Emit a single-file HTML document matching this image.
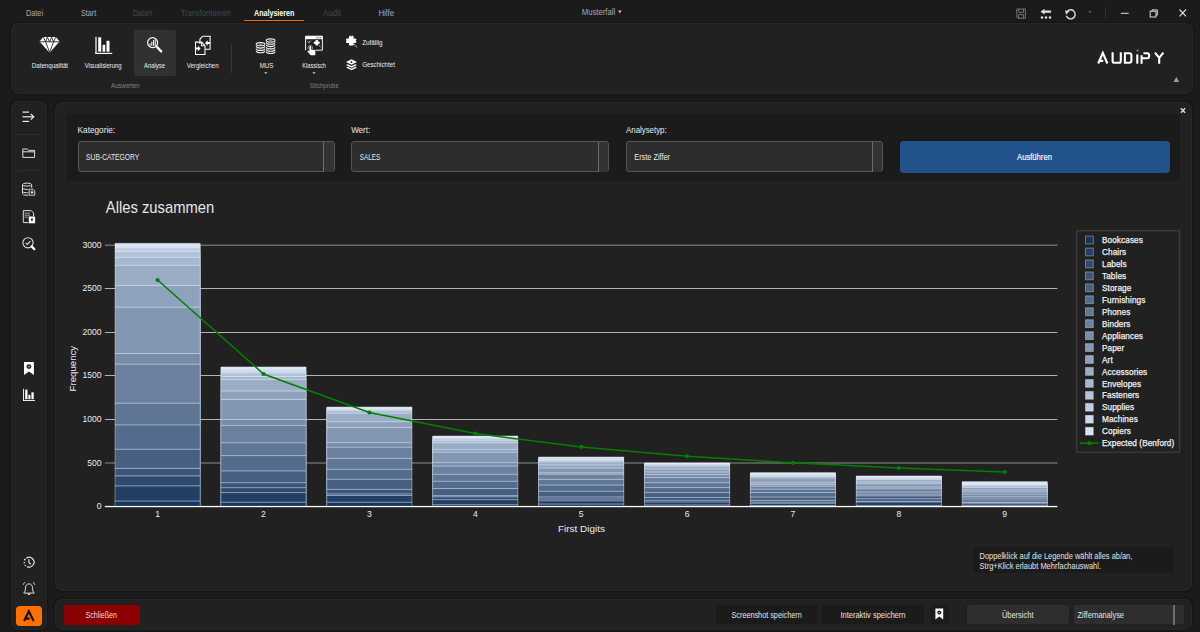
<!DOCTYPE html>
<html><head><meta charset="utf-8"><style>
html,body{margin:0;padding:0;}
body{width:1200px;height:632px;overflow:hidden;background:#1b1b1b;position:relative;font-family:"Liberation Sans", sans-serif;}
.t{position:absolute;white-space:nowrap;}
.a{position:absolute;box-sizing:border-box;}
svg{position:absolute;overflow:visible;}
text{font-family:"Liberation Sans", sans-serif;white-space:pre;}
</style></head><body>
<!-- panels -->
<div class="a" style="left:11px;top:23px;width:1182px;height:71px;background:#212121;border-radius:7px;border:1px solid #272727;box-shadow:0 0 1.5px 0.5px #151515;"></div>
<div class="a" style="left:11px;top:101px;width:35.6px;height:528.7px;background:#212121;border-radius:7px;border:1px solid #272727;box-shadow:0 0 1.5px 0.5px #151515;"></div>
<div class="a" style="left:55px;top:101.7px;width:1136.7px;height:489.3px;background:#212121;border-radius:7px;border:1px solid #272727;box-shadow:0 0 1.5px 0.5px #151515;"></div>
<div class="a" style="left:67.4px;top:113.7px;width:1112.4px;height:67.6px;background:#1b1b1b;border-radius:3px;"></div>
<div class="a" style="left:55px;top:599px;width:1136.5px;height:30.7px;background:#212121;border-radius:7px;border:1px solid #272727;box-shadow:0 0 1.5px 0.5px #151515;"></div>

<!-- title bar underline -->
<div class="a" style="left:243.6px;top:19.9px;width:60.4px;height:1.6px;background:#e86a00;"></div>

<!-- ribbon highlight -->
<div class="a" style="left:133.7px;top:29.6px;width:42.2px;height:46.8px;background:#313131;border-radius:2px;"></div>
<div class="a" style="left:231px;top:43px;width:1px;height:30.3px;background:#363636;"></div>
<!-- title bar separator -->
<div class="a" style="left:1105px;top:6.5px;width:1px;height:12.5px;background:#303030;"></div>

<!-- dropdowns -->
<div class="a" style="left:77.5px;top:141.1px;width:257.1px;height:31.4px;background:#2d2d2d;border:1.2px solid #555555;border-radius:3px;"></div>
<div class="a" style="left:323.3px;top:142px;width:10.5px;height:29.6px;background:#333;border-left:1.2px solid #6c6c6c;border-radius:0 3px 3px 0;"></div>
<div class="a" style="left:351.2px;top:141.1px;width:257.8px;height:31.4px;background:#2d2d2d;border:1.2px solid #555555;border-radius:3px;"></div>
<div class="a" style="left:598.3px;top:142px;width:9.9px;height:29.6px;background:#333;border-left:1.2px solid #6c6c6c;border-radius:0 3px 3px 0;"></div>
<div class="a" style="left:626px;top:141.1px;width:257.1px;height:31.4px;background:#2d2d2d;border:1.2px solid #555555;border-radius:3px;"></div>
<div class="a" style="left:872.2px;top:142px;width:10.1px;height:29.6px;background:#333;border-left:1.2px solid #6c6c6c;border-radius:0 3px 3px 0;"></div>
<div class="a" style="left:899.8px;top:141.1px;width:270px;height:31.7px;background:#21528c;border-radius:4px;"></div>

<!-- tooltip -->
<div class="a" style="left:973.3px;top:547.1px;width:200.6px;height:26.1px;background:#1b1b1b;border-radius:3px;"></div>

<!-- bottom buttons -->
<div class="a" style="left:63.5px;top:604.5px;width:76.5px;height:20px;background:#8b0000;border-radius:2px;"></div>
<div class="a" style="left:716.3px;top:605px;width:100.5px;height:18.7px;background:#1b1b1b;border-radius:2px;"></div>
<div class="a" style="left:822.3px;top:605px;width:101.4px;height:18.7px;background:#1b1b1b;border-radius:2px;"></div>
<div class="a" style="left:929.6px;top:605px;width:19.4px;height:18.7px;background:#1b1b1b;border-radius:2px;"></div>
<div class="a" style="left:967px;top:604.5px;width:102px;height:19.8px;background:#2e2e2e;border-radius:2px;"></div>
<div class="a" style="left:1073.9px;top:604.5px;width:109.8px;height:19.8px;background:#2e2e2e;border-radius:2px;"></div>
<div class="a" style="left:1173.2px;top:604.5px;width:1.6px;height:20px;background:#6a6a6a;"></div>

<!-- orange A -->
<div class="a" style="left:15.7px;top:605.6px;width:26.5px;height:20.7px;background:#ff7000;border-radius:4px;"></div>

<!-- sidebar separators -->
<div class="a" style="left:17px;top:133.5px;width:24px;height:1px;background:#2c2c2c;"></div>
<div class="a" style="left:17px;top:170.2px;width:24px;height:1px;background:#2c2c2c;"></div>

<!-- ICONS -->
<svg style="left:0;top:0" width="1200" height="632" viewBox="0 0 1200 632">
 <g fill="#ffffff" stroke="none">
  <!-- diamond -->
  <path d="M43.2 37 L55.9 37 L59.6 41.6 L49.6 52.7 L39.5 41.6 Z"/>
 </g>
 <g stroke="#212121" stroke-width="0.9" fill="none">
  <path d="M39.8 41.8 L59.3 41.8"/>
  <path d="M43.4 37.2 L45.6 41.8 L47.4 37.2 M47.4 37.2 L49.6 41.8 L51.6 37.2 L53.6 41.8 L55.7 37.2"/>
  <path d="M45.6 41.8 L49.6 52.4 L53.6 41.8"/>
 </g>
 <!-- bar chart ribbon -->
 <g fill="#ffffff">
  <rect x="95.4" y="36.8" width="1.2" height="17.2"/>
  <rect x="95.4" y="52.8" width="16.8" height="1.2"/>
  <rect x="98.2" y="37.3" width="3.0" height="14.4"/>
  <rect x="102.6" y="44.8" width="2.6" height="6.9"/>
  <rect x="106.5" y="40.8" width="3.0" height="10.9"/>
 </g>
 <!-- magnifier analyse -->
 <g fill="none" stroke="#ffffff">
  <circle cx="152.6" cy="42.6" r="5.0" stroke-width="1.2"/>
  <path d="M156.4 46.4 L161.2 51.4" stroke-width="2.3" stroke-linecap="round"/>
 </g>
 <g fill="#ffffff">
  <rect x="149.6" y="43.5" width="1" height="2.2"/>
  <rect x="151.3" y="41.8" width="1" height="3.9"/>
  <rect x="153" y="40.2" width="1" height="5.5"/>
  <rect x="154.7" y="39.4" width="1" height="6.3"/>
 </g>
 <!-- vergleichen -->
 <g fill="none" stroke="#ffffff" stroke-width="1.05">
  <path d="M202.5 36.3 L210.1 36.3 L210.1 49.3 L205.4 49.3 M199.9 44 L199.9 39.3 L202.5 36.3"/>
  <path d="M195.5 42.1 L201.6 42.1 L205 45.7 L205 54.4 L195.5 54.4 Z"/>
  <path d="M201.6 42.1 L201.6 45.7 L205 45.7"/>
 </g>
 <g fill="#ffffff">
  <path d="M195.6 47.4 L197.9 47.4 L197.9 45.8 L200.6 48.5 L197.9 51.2 L197.9 49.6 L195.6 49.6 Z"/>
  <path d="M210 41.9 L207.7 41.9 L207.7 40.3 L205 43 L207.7 45.7 L207.7 44.1 L210 44.1 Z"/>
 </g>
 <!-- coins -->
 <g fill="none" stroke="#f2f2f2" stroke-width="1.1">
  <path d="M256.2 50.7 Q256.2 52.7 260.5 52.7 Q264.8 52.7 264.8 50.7"/>
  <path d="M256.2 48.400000000000006 Q256.2 50.400000000000006 260.5 50.400000000000006 Q264.8 50.400000000000006 264.8 48.400000000000006"/>
  <path d="M256.2 46.1 Q256.2 48.1 260.5 48.1 Q264.8 48.1 264.8 46.1"/>
  <ellipse cx="260.5" cy="44.2" rx="4.3" ry="1.6"/>
  <path d="M266.3 51.5 Q266.3 53.5 270.65 53.5 Q275 53.5 275 51.5"/>
  <path d="M266.3 49.2 Q266.3 51.2 270.65 51.2 Q275 51.2 275 49.2"/>
  <path d="M266.3 46.900000000000006 Q266.3 48.900000000000006 270.65 48.900000000000006 Q275 48.900000000000006 275 46.900000000000006"/>
  <path d="M266.3 44.6 Q266.3 46.6 270.65 46.6 Q275 46.6 275 44.6"/>
  <path d="M266.3 42.300000000000004 Q266.3 44.300000000000004 270.65 44.300000000000004 Q275 44.300000000000004 275 42.300000000000004"/>
  <ellipse cx="270.65" cy="40.5" rx="4.35" ry="1.6"/>
 </g>
 <ellipse cx="260.5" cy="44.3" rx="2.2" ry="0.7" fill="#8a8a8a"/>
 <ellipse cx="270.65" cy="40.6" rx="2.2" ry="0.7" fill="#8a8a8a"/>
 <!-- klassisch window -->
 <path d="M305.6 50.2 L305.6 36.2 L322.4 36.2 L322.4 50.2 L315.6 50.2" fill="none" stroke="#ffffff" stroke-width="0.95"/>
 <rect x="305.6" y="36.2" width="16.8" height="3" fill="#ffffff"/>
 <g fill="#212121"><circle cx="320.6" cy="37.7" r="0.55"/><circle cx="318.8" cy="37.7" r="0.55"/><circle cx="317" cy="37.7" r="0.55"/></g>
 <g fill="#ffffff">
  <rect x="313.9" y="41.4" width="5.8" height="2.6" rx="0.8"/>
  <rect x="315.5" y="39.9" width="2.6" height="5.6" rx="0.8"/>
  <path d="M309.4 47.2 Q309.4 45.9 310.3 45.9 Q311.2 45.9 311.2 47.2 L311.2 49.4 L314.6 50 Q315.4 50.2 315.4 51 L315.2 55.2 L310.6 55.2 L307.6 51.6 Q307.4 50.8 308.2 50.6 L309.4 51.2 Z"/>
 </g>
 <path d="M308 49.2 Q307.4 46.2 310.3 45 Q313.2 46.2 312.6 49.2" fill="none" stroke="#bbbbbb" stroke-width="0.7"/>
 <path d="M307.8 41.6 l1 1 l1.8 -1.9" stroke="#ffffff" stroke-width="0.9" fill="none"/>
 <path d="M318.8 45 l2 2.4" stroke="#cccccc" stroke-width="0.7" fill="none"/>
 <!-- clover -->
 <g fill="#ffffff">
  <rect x="346" y="38.4" width="10.3" height="4.5" rx="1.2"/>
  <rect x="349" y="35.8" width="4.6" height="9.8" rx="1.2"/>
 </g>
 <g fill="#212121"><circle cx="346" cy="40.65" r="0.6"/><circle cx="356.3" cy="40.65" r="0.6"/><circle cx="351.3" cy="35.8" r="0.6"/></g>
 <path d="M353.8 43.8 L357 47.6" stroke="#dddddd" stroke-width="0.8"/>
 <!-- layers -->
 <g fill="#ffffff">
  <path d="M346 62 L351.5 59.3 L357 62 L351.5 64.7 Z"/>
  <path d="M346 65 L347.6 64.2 L351.5 66.1 L355.4 64.2 L357 65 L351.5 67.7 Z"/>
  <path d="M346 67.6 L347.6 66.8 L351.5 68.7 L355.4 66.8 L357 67.6 L351.5 70.3 Z"/>
 </g>
 <circle cx="351.5" cy="62" r="0.9" fill="#212121"/>
 <!-- small dropdown arrows ribbon -->
 <path d="M264.2 72.2 L267.4 72.2 L265.8 74.1 Z" fill="#d8d8d8"/>
 <path d="M312.4 72.2 L315.6 72.2 L314 74.1 Z" fill="#d8d8d8"/>
 <!-- Musterfall arrow -->
 <path d="M618.2 10.4 L621.6 10.4 L619.9 13.6 Z" fill="#c8c8c8"/>

 <!-- title bar icons -->
 <g fill="none" stroke="#767676" stroke-width="1">
  <path d="M1016.8 9 L1025.4 9 L1025.4 18.2 L1017.8 18.2 L1016.8 17.2 Z"/>
  <path d="M1018.8 9 L1018.8 12.4 L1023.4 12.4 L1023.4 9 M1018.6 18.2 L1018.6 14.6 L1023.6 14.6 L1023.6 18.2"/>
 </g>
 <g fill="#dddddd">
  <path d="M1040.5 11.7 L1044.6 8.8 L1044.6 10.6 L1051.1 10.6 L1051.1 12.8 L1044.6 12.8 L1044.6 14.6 Z"/>
  <circle cx="1042" cy="17.4" r="1.25"/><circle cx="1046" cy="17.4" r="1.25"/><circle cx="1050" cy="17.4" r="1.25"/>
 </g>
 <path d="M1067.4 11.2 A4.5 4.5 0 1 1 1066.4 15.8" fill="none" stroke="#dddddd" stroke-width="1.4"/>
 <path d="M1065 10.4 L1069.6 11.2 L1066 14.6 Z" fill="#dddddd"/>
 <path d="M1088.2 11.2 L1092 11.2 L1090.1 13.1 Z" fill="#666"/>
 <rect x="1120.8" y="12.8" width="7.9" height="1" fill="#dddddd"/>
 <g fill="none" stroke="#dddddd" stroke-width="1">
  <rect x="1150.2" y="11.2" width="5.8" height="5.8"/>
  <path d="M1152 11.2 L1152 9.9 L1157.3 9.9 L1157.3 15.2 L1156 15.2"/>
  <path d="M1179.5 9.5 L1186 16.4 M1186 9.5 L1179.5 16.4" stroke-width="1.1"/>
 </g>

 <!-- AUDIPY logo -->
 <g fill="none" stroke="#ffffff" stroke-width="2.1" stroke-linejoin="miter">
  <path d="M1098.2 63.5 L1102.8 52.8 L1107.4 63.5 M1099.6 60.9 L1103.2 60.9"/>
  <path d="M1112.6 52.3 L1112.6 61 Q1112.6 62.8 1114.4 62.8 L1119 62.8 Q1120.8 62.8 1120.8 61 L1120.8 52.3"/>
  <path d="M1124.9 53.2 L1129.4 53.2 Q1131.4 53.2 1131.4 55.2 L1131.4 60.8 Q1131.4 62.8 1129.4 62.8 L1124.9 62.8 Z"/>
  <path d="M1137.3 54.4 L1137.3 63.7"/>
  <path d="M1141.6 63.7 L1141.6 55.2 M1143.4 53.2 L1147.2 53.2 Q1149.1 53.2 1149.1 55.2 L1149.1 56.2 Q1149.1 58.2 1147.2 58.2 L1141.6 58.2"/>
  <path d="M1155 52.6 L1159.2 57.8 L1163.4 52.6 M1159.2 57.8 L1159.2 63.7"/>
 </g>
 <circle cx="1137.5" cy="50.6" r="1" fill="#ff7000"/>
 <path d="M1173.5 81.9 L1179.2 81.9 L1176.35 76.9 Z" fill="#9c9ca2"/>

 <!-- close x panel -->
 <path d="M1180.9 108.3 L1185.1 112.7 M1185.1 108.3 L1180.9 112.7" stroke="#e0e0e0" stroke-width="1.3"/>

 <!-- sidebar icons -->
 <g fill="#eeeeee">
  <rect x="22.5" y="111.5" width="6.5" height="1.2"/>
  <rect x="22.5" y="120.8" width="6.5" height="1.2"/>
  <rect x="22.5" y="116.2" width="11.3" height="1.2"/>
  <path d="M31.2 113.6 L34.6 116.8 L31.2 120 L30.4 119.2 L32.9 116.8 L30.4 114.4 Z"/>
 </g>
 <g fill="none" stroke="#dddddd" stroke-width="1">
  <path d="M22.8 149 L27.4 149 L28.6 150.4 L34.6 150.4 L34.6 157.4 L22.8 157.4 Z"/>
  <path d="M22.8 151.8 L34.6 151.8"/>
  <!-- database -->
  <ellipse cx="27.1" cy="184.6" rx="4.6" ry="1.5"/>
  <path d="M22.5 184.6 L22.5 193.8 Q22.5 195.3 27.1 195.3 L28.4 195.3 M31.7 184.6 L31.7 187.8"/>
  <path d="M22.5 187.9 Q22.5 189.4 27.1 189.4 L28.4 189.4 M22.5 191.3 Q22.5 192.8 27.1 192.8 L28.4 192.8"/>
  <!-- doc -->
  <path d="M31.2 210.6 L23.3 210.6 L23.3 222.6 L28.4 222.6 M31.2 210.6 L33.6 213 L33.6 216"/>
  <!-- magnifier check -->
  <circle cx="28" cy="242.8" r="5.1" stroke-width="1.1"/>
  <path d="M25.7 242.8 L27.3 244.4 L30.4 241.2" stroke-width="1.1"/>
 </g>
 <path d="M31.6 246.4 L34.3 249.1" stroke="#ffffff" stroke-width="2.2" stroke-linecap="round"/>
 <g fill="#ffffff">
  <rect x="24.6" y="212.6" width="5.4" height="1.1" fill="#9a9a9a"/>
  <rect x="24.6" y="214.6" width="5.4" height="1.1" fill="#9a9a9a"/>
  <rect x="24.6" y="216.6" width="3.6" height="1.1" fill="#9a9a9a"/>
 </g>
 <path d="M29.2 189.2 L33 189.2 L34.8 191 L34.8 195.2 L29.2 195.2 Z" fill="#212121" stroke="#dddddd" stroke-width="0.9"/>
 <path d="M32 190.6 L32 193.8 M30.6 192.2 L33.4 192.2" stroke="#ffffff" stroke-width="1"/>
 <rect x="28.8" y="216.5" width="6.3" height="6.8" fill="#ffffff"/>
 <path d="M30.6 219.6 L33.3 219.6 L31.95 221.4 Z" fill="#212121"/>
 <rect x="31.1" y="218.3" width="1.7" height="1.5" fill="#212121"/>
 <!-- bookmark -->
 <path d="M24 361.9 L33.9 361.9 L33.9 374.9 L28.95 371.4 L24 374.9 Z" fill="#ffffff"/>
 <circle cx="28.95" cy="366.6" r="2.4" fill="#212121"/>
 <circle cx="28.95" cy="366.6" r="1.0" fill="#9a9a9a"/>
 <!-- bar chart sidebar -->
 <g fill="#ffffff">
  <rect x="23.1" y="388.9" width="0.9" height="12.1"/>
  <rect x="23.1" y="400.1" width="11.8" height="0.9"/>
  <rect x="25.2" y="389.6" width="2.3" height="9.6"/>
  <rect x="28.4" y="394.8" width="2" height="4.4"/>
  <rect x="31.4" y="392.3" width="2.3" height="6.9"/>
 </g>
 <!-- history -->
 <path d="M26.29 558.19 A4.9 4.9 0 1 1 27.03 566.64" fill="none" stroke="#e4e4e4" stroke-width="1.2"/>
 <path d="M28.9 559.3 L28.9 562.5 L30.9 564.3" fill="none" stroke="#e4e4e4" stroke-width="1.1"/>
 <g fill="#e4e4e4"><circle cx="24.8" cy="559.6" r="0.95"/><circle cx="24.2" cy="562.7" r="0.75"/><circle cx="25.3" cy="565.5" r="0.75"/></g>
 <!-- bell -->
 <path d="M23.8 593.1 Q25.5 591.6 25.5 588.2 Q25.5 583.9 29 583.9 Q32.5 583.9 32.5 588.2 Q32.5 591.6 34.2 593.1 Z" fill="none" stroke="#dcdcdc" stroke-width="1"/>
 <path d="M23.1 584.8 Q23.7 582.9 25.1 582.2 M34.9 584.8 Q34.3 582.9 32.9 582.2" fill="none" stroke="#dcdcdc" stroke-width="0.9"/>
 <path d="M27.6 593.6 L30.4 593.6 L29.9 595 L28.1 595 Z" fill="#e4e4e4"/>
 <!-- orange A glyph -->
 <g fill="none" stroke="#111" stroke-width="2.1">
  <path d="M24.1 621 L28.85 611.2 L33.6 621 M25.4 618.6 L29.6 618.6"/>
 </g>
 <!-- bookmark bottom -->
 <path d="M935.4 608.6 L943.2 608.6 L943.2 619.4 L939.3 616.6 L935.4 619.4 Z" fill="#ffffff"/>
 <circle cx="939.3" cy="612.6" r="2.0" fill="#1b1b1b"/>
 <circle cx="939.3" cy="612.6" r="0.8" fill="#9a9a9a"/>
</svg>

<svg style="left:0;top:0" width="1200" height="632" viewBox="0 0 1200 632">
<rect x="104.8" y="244.6" width="952.6" height="1.2" fill="#b4b4b4" opacity="0.62"/>
<rect x="104.8" y="288" width="952.6" height="1" fill="#b4b4b4" opacity="1"/>
<rect x="104.8" y="332" width="952.6" height="1" fill="#b4b4b4" opacity="1"/>
<rect x="104.8" y="375" width="952.6" height="1" fill="#b4b4b4" opacity="1"/>
<rect x="104.8" y="419" width="952.6" height="1" fill="#b4b4b4" opacity="1"/>
<rect x="104.8" y="462.4" width="952.6" height="1.2" fill="#b4b4b4" opacity="0.62"/>
<rect x="115.00" y="243.40" width="85.2" height="263.10" fill="#d6e4f5"/>
<rect x="115.00" y="246.10" width="85.2" height="260.40" fill="#cad9eb"/>
<rect x="115.00" y="247.70" width="85.2" height="258.80" fill="#becee2"/>
<rect x="115.00" y="251.40" width="85.2" height="255.10" fill="#b2c3d8"/>
<rect x="115.00" y="257.40" width="85.2" height="249.10" fill="#a6b8cf"/>
<rect x="115.00" y="265.30" width="85.2" height="241.20" fill="#9aadc5"/>
<rect x="115.00" y="285.50" width="85.2" height="221.00" fill="#8ea2bc"/>
<rect x="115.00" y="307.20" width="85.2" height="199.30" fill="#8297b2"/>
<rect x="115.00" y="353.50" width="85.2" height="153.00" fill="#768ca8"/>
<rect x="115.00" y="364.20" width="85.2" height="142.30" fill="#6b819f"/>
<rect x="115.00" y="403.20" width="85.2" height="103.30" fill="#5f7695"/>
<rect x="115.00" y="424.90" width="85.2" height="81.60" fill="#536b8c"/>
<rect x="115.00" y="449.30" width="85.2" height="57.20" fill="#476082"/>
<rect x="115.00" y="468.40" width="85.2" height="38.10" fill="#3b5579"/>
<rect x="115.00" y="475.90" width="85.2" height="30.60" fill="#2f4a6f"/>
<rect x="115.00" y="485.90" width="85.2" height="20.60" fill="#233f66"/>
<rect x="115.00" y="501.10" width="85.2" height="5.40" fill="#17345c"/>
<rect x="115.00" y="500.60" width="85.2" height="1" fill="#f0f6ff" opacity="0.5"/>
<rect x="115.00" y="485.40" width="85.2" height="1" fill="#f0f6ff" opacity="0.5"/>
<rect x="115.00" y="475.40" width="85.2" height="1" fill="#f0f6ff" opacity="0.5"/>
<rect x="115.00" y="467.90" width="85.2" height="1" fill="#f0f6ff" opacity="0.5"/>
<rect x="115.00" y="448.80" width="85.2" height="1" fill="#f0f6ff" opacity="0.5"/>
<rect x="115.00" y="424.40" width="85.2" height="1" fill="#f0f6ff" opacity="0.5"/>
<rect x="115.00" y="402.70" width="85.2" height="1" fill="#f0f6ff" opacity="0.5"/>
<rect x="115.00" y="363.70" width="85.2" height="1" fill="#f0f6ff" opacity="0.5"/>
<rect x="115.00" y="353.00" width="85.2" height="1" fill="#f0f6ff" opacity="0.5"/>
<rect x="115.00" y="306.70" width="85.2" height="1" fill="#f0f6ff" opacity="0.5"/>
<rect x="115.00" y="285.00" width="85.2" height="1" fill="#f0f6ff" opacity="0.5"/>
<rect x="115.00" y="264.80" width="85.2" height="1" fill="#f0f6ff" opacity="0.5"/>
<rect x="115.00" y="256.90" width="85.2" height="1" fill="#f0f6ff" opacity="0.5"/>
<rect x="115.00" y="250.90" width="85.2" height="1" fill="#f0f6ff" opacity="0.5"/>
<rect x="115.00" y="247.20" width="85.2" height="1" fill="#f0f6ff" opacity="0.5"/>
<rect x="115.00" y="245.60" width="85.2" height="1" fill="#f0f6ff" opacity="0.5"/>
<rect x="115.00" y="242.90" width="85.2" height="1" fill="#f0f6ff" opacity="0.5"/>
<rect x="114.50" y="243.40" width="1" height="263.10" fill="#ffffff" opacity="0.35"/>
<rect x="199.70" y="243.40" width="1" height="263.10" fill="#ffffff" opacity="0.35"/>
<rect x="220.90" y="367.00" width="85.2" height="139.50" fill="#d6e4f5"/>
<rect x="220.90" y="369.00" width="85.2" height="137.50" fill="#cad9eb"/>
<rect x="220.90" y="371.10" width="85.2" height="135.40" fill="#becee2"/>
<rect x="220.90" y="372.70" width="85.2" height="133.80" fill="#b2c3d8"/>
<rect x="220.90" y="376.50" width="85.2" height="130.00" fill="#a6b8cf"/>
<rect x="220.90" y="379.60" width="85.2" height="126.90" fill="#9aadc5"/>
<rect x="220.90" y="391.00" width="85.2" height="115.50" fill="#8ea2bc"/>
<rect x="220.90" y="399.50" width="85.2" height="107.00" fill="#8297b2"/>
<rect x="220.90" y="419.50" width="85.2" height="87.00" fill="#768ca8"/>
<rect x="220.90" y="425.40" width="85.2" height="81.10" fill="#6b819f"/>
<rect x="220.90" y="442.80" width="85.2" height="63.70" fill="#5f7695"/>
<rect x="220.90" y="455.60" width="85.2" height="50.90" fill="#536b8c"/>
<rect x="220.90" y="470.90" width="85.2" height="35.60" fill="#476082"/>
<rect x="220.90" y="482.70" width="85.2" height="23.80" fill="#3b5579"/>
<rect x="220.90" y="487.70" width="85.2" height="18.80" fill="#2f4a6f"/>
<rect x="220.90" y="492.60" width="85.2" height="13.90" fill="#233f66"/>
<rect x="220.90" y="502.30" width="85.2" height="4.20" fill="#17345c"/>
<rect x="220.90" y="501.80" width="85.2" height="1" fill="#f0f6ff" opacity="0.5"/>
<rect x="220.90" y="492.10" width="85.2" height="1" fill="#f0f6ff" opacity="0.5"/>
<rect x="220.90" y="487.20" width="85.2" height="1" fill="#f0f6ff" opacity="0.5"/>
<rect x="220.90" y="482.20" width="85.2" height="1" fill="#f0f6ff" opacity="0.5"/>
<rect x="220.90" y="470.40" width="85.2" height="1" fill="#f0f6ff" opacity="0.5"/>
<rect x="220.90" y="455.10" width="85.2" height="1" fill="#f0f6ff" opacity="0.5"/>
<rect x="220.90" y="442.30" width="85.2" height="1" fill="#f0f6ff" opacity="0.5"/>
<rect x="220.90" y="424.90" width="85.2" height="1" fill="#f0f6ff" opacity="0.5"/>
<rect x="220.90" y="419.00" width="85.2" height="1" fill="#f0f6ff" opacity="0.5"/>
<rect x="220.90" y="399.00" width="85.2" height="1" fill="#f0f6ff" opacity="0.5"/>
<rect x="220.90" y="390.50" width="85.2" height="1" fill="#f0f6ff" opacity="0.5"/>
<rect x="220.90" y="379.10" width="85.2" height="1" fill="#f0f6ff" opacity="0.5"/>
<rect x="220.90" y="376.00" width="85.2" height="1" fill="#f0f6ff" opacity="0.5"/>
<rect x="220.90" y="372.20" width="85.2" height="1" fill="#f0f6ff" opacity="0.5"/>
<rect x="220.90" y="370.60" width="85.2" height="1" fill="#f0f6ff" opacity="0.5"/>
<rect x="220.90" y="368.50" width="85.2" height="1" fill="#f0f6ff" opacity="0.5"/>
<rect x="220.90" y="366.50" width="85.2" height="1" fill="#f0f6ff" opacity="0.5"/>
<rect x="220.40" y="367.00" width="1" height="139.50" fill="#ffffff" opacity="0.35"/>
<rect x="305.60" y="367.00" width="1" height="139.50" fill="#ffffff" opacity="0.35"/>
<rect x="326.78" y="407.10" width="85.2" height="99.40" fill="#d6e4f5"/>
<rect x="326.78" y="407.80" width="85.2" height="98.70" fill="#cad9eb"/>
<rect x="326.78" y="408.50" width="85.2" height="98.00" fill="#becee2"/>
<rect x="326.78" y="409.50" width="85.2" height="97.00" fill="#b2c3d8"/>
<rect x="326.78" y="410.90" width="85.2" height="95.60" fill="#a6b8cf"/>
<rect x="326.78" y="413.30" width="85.2" height="93.20" fill="#9aadc5"/>
<rect x="326.78" y="421.70" width="85.2" height="84.80" fill="#8ea2bc"/>
<rect x="326.78" y="427.50" width="85.2" height="79.00" fill="#8297b2"/>
<rect x="326.78" y="442.70" width="85.2" height="63.80" fill="#768ca8"/>
<rect x="326.78" y="447.20" width="85.2" height="59.30" fill="#6b819f"/>
<rect x="326.78" y="458.40" width="85.2" height="48.10" fill="#5f7695"/>
<rect x="326.78" y="469.30" width="85.2" height="37.20" fill="#536b8c"/>
<rect x="326.78" y="479.30" width="85.2" height="27.20" fill="#476082"/>
<rect x="326.78" y="489.40" width="85.2" height="17.10" fill="#3b5579"/>
<rect x="326.78" y="494.00" width="85.2" height="12.50" fill="#2f4a6f"/>
<rect x="326.78" y="495.50" width="85.2" height="11.00" fill="#233f66"/>
<rect x="326.78" y="502.30" width="85.2" height="4.20" fill="#17345c"/>
<rect x="326.78" y="501.80" width="85.2" height="1" fill="#f0f6ff" opacity="0.5"/>
<rect x="326.78" y="495.00" width="85.2" height="1" fill="#f0f6ff" opacity="0.5"/>
<rect x="326.78" y="493.50" width="85.2" height="1" fill="#f0f6ff" opacity="0.5"/>
<rect x="326.78" y="488.90" width="85.2" height="1" fill="#f0f6ff" opacity="0.5"/>
<rect x="326.78" y="478.80" width="85.2" height="1" fill="#f0f6ff" opacity="0.5"/>
<rect x="326.78" y="468.80" width="85.2" height="1" fill="#f0f6ff" opacity="0.5"/>
<rect x="326.78" y="457.90" width="85.2" height="1" fill="#f0f6ff" opacity="0.5"/>
<rect x="326.78" y="446.70" width="85.2" height="1" fill="#f0f6ff" opacity="0.5"/>
<rect x="326.78" y="442.20" width="85.2" height="1" fill="#f0f6ff" opacity="0.5"/>
<rect x="326.78" y="427.00" width="85.2" height="1" fill="#f0f6ff" opacity="0.5"/>
<rect x="326.78" y="421.20" width="85.2" height="1" fill="#f0f6ff" opacity="0.5"/>
<rect x="326.78" y="412.80" width="85.2" height="1" fill="#f0f6ff" opacity="0.5"/>
<rect x="326.78" y="410.40" width="85.2" height="1" fill="#f0f6ff" opacity="0.5"/>
<rect x="326.78" y="409.00" width="85.2" height="1" fill="#f0f6ff" opacity="0.5"/>
<rect x="326.78" y="408.00" width="85.2" height="1" fill="#f0f6ff" opacity="0.5"/>
<rect x="326.78" y="407.30" width="85.2" height="1" fill="#f0f6ff" opacity="0.5"/>
<rect x="326.78" y="406.60" width="85.2" height="1" fill="#f0f6ff" opacity="0.5"/>
<rect x="326.28" y="407.10" width="1" height="99.40" fill="#ffffff" opacity="0.35"/>
<rect x="411.48" y="407.10" width="1" height="99.40" fill="#ffffff" opacity="0.35"/>
<rect x="432.68" y="436.10" width="85.2" height="70.40" fill="#d6e4f5"/>
<rect x="432.68" y="436.80" width="85.2" height="69.70" fill="#cad9eb"/>
<rect x="432.68" y="437.50" width="85.2" height="69.00" fill="#becee2"/>
<rect x="432.68" y="438.90" width="85.2" height="67.60" fill="#b2c3d8"/>
<rect x="432.68" y="440.80" width="85.2" height="65.70" fill="#a6b8cf"/>
<rect x="432.68" y="442.70" width="85.2" height="63.80" fill="#9aadc5"/>
<rect x="432.68" y="449.60" width="85.2" height="56.90" fill="#8ea2bc"/>
<rect x="432.68" y="452.20" width="85.2" height="54.30" fill="#8297b2"/>
<rect x="432.68" y="462.70" width="85.2" height="43.80" fill="#768ca8"/>
<rect x="432.68" y="466.10" width="85.2" height="40.40" fill="#6b819f"/>
<rect x="432.68" y="474.30" width="85.2" height="32.20" fill="#5f7695"/>
<rect x="432.68" y="481.30" width="85.2" height="25.20" fill="#536b8c"/>
<rect x="432.68" y="488.50" width="85.2" height="18.00" fill="#476082"/>
<rect x="432.68" y="495.60" width="85.2" height="10.90" fill="#3b5579"/>
<rect x="432.68" y="496.80" width="85.2" height="9.70" fill="#2f4a6f"/>
<rect x="432.68" y="499.60" width="85.2" height="6.90" fill="#233f66"/>
<rect x="432.68" y="504.70" width="85.2" height="1.80" fill="#17345c"/>
<rect x="432.68" y="504.20" width="85.2" height="1" fill="#f0f6ff" opacity="0.5"/>
<rect x="432.68" y="499.10" width="85.2" height="1" fill="#f0f6ff" opacity="0.5"/>
<rect x="432.68" y="496.30" width="85.2" height="1" fill="#f0f6ff" opacity="0.5"/>
<rect x="432.68" y="495.10" width="85.2" height="1" fill="#f0f6ff" opacity="0.5"/>
<rect x="432.68" y="488.00" width="85.2" height="1" fill="#f0f6ff" opacity="0.5"/>
<rect x="432.68" y="480.80" width="85.2" height="1" fill="#f0f6ff" opacity="0.5"/>
<rect x="432.68" y="473.80" width="85.2" height="1" fill="#f0f6ff" opacity="0.5"/>
<rect x="432.68" y="465.60" width="85.2" height="1" fill="#f0f6ff" opacity="0.5"/>
<rect x="432.68" y="462.20" width="85.2" height="1" fill="#f0f6ff" opacity="0.5"/>
<rect x="432.68" y="451.70" width="85.2" height="1" fill="#f0f6ff" opacity="0.5"/>
<rect x="432.68" y="449.10" width="85.2" height="1" fill="#f0f6ff" opacity="0.5"/>
<rect x="432.68" y="442.20" width="85.2" height="1" fill="#f0f6ff" opacity="0.5"/>
<rect x="432.68" y="440.30" width="85.2" height="1" fill="#f0f6ff" opacity="0.5"/>
<rect x="432.68" y="438.40" width="85.2" height="1" fill="#f0f6ff" opacity="0.5"/>
<rect x="432.68" y="437.00" width="85.2" height="1" fill="#f0f6ff" opacity="0.5"/>
<rect x="432.68" y="436.30" width="85.2" height="1" fill="#f0f6ff" opacity="0.5"/>
<rect x="432.68" y="435.60" width="85.2" height="1" fill="#f0f6ff" opacity="0.5"/>
<rect x="432.18" y="436.10" width="1" height="70.40" fill="#ffffff" opacity="0.35"/>
<rect x="517.38" y="436.10" width="1" height="70.40" fill="#ffffff" opacity="0.35"/>
<rect x="538.57" y="457.10" width="85.2" height="49.40" fill="#d6e4f5"/>
<rect x="538.57" y="457.70" width="85.2" height="48.80" fill="#cad9eb"/>
<rect x="538.57" y="458.30" width="85.2" height="48.20" fill="#becee2"/>
<rect x="538.57" y="459.50" width="85.2" height="47.00" fill="#b2c3d8"/>
<rect x="538.57" y="460.50" width="85.2" height="46.00" fill="#a6b8cf"/>
<rect x="538.57" y="461.90" width="85.2" height="44.60" fill="#9aadc5"/>
<rect x="538.57" y="465.00" width="85.2" height="41.50" fill="#8ea2bc"/>
<rect x="538.57" y="468.00" width="85.2" height="38.50" fill="#8297b2"/>
<rect x="538.57" y="472.80" width="85.2" height="33.70" fill="#768ca8"/>
<rect x="538.57" y="474.20" width="85.2" height="32.30" fill="#6b819f"/>
<rect x="538.57" y="479.40" width="85.2" height="27.10" fill="#5f7695"/>
<rect x="538.57" y="485.10" width="85.2" height="21.40" fill="#536b8c"/>
<rect x="538.57" y="491.30" width="85.2" height="15.20" fill="#476082"/>
<rect x="538.57" y="497.00" width="85.2" height="9.50" fill="#3b5579"/>
<rect x="538.57" y="499.00" width="85.2" height="7.50" fill="#2f4a6f"/>
<rect x="538.57" y="500.80" width="85.2" height="5.70" fill="#233f66"/>
<rect x="538.57" y="504.10" width="85.2" height="2.40" fill="#17345c"/>
<rect x="538.57" y="503.60" width="85.2" height="1" fill="#f0f6ff" opacity="0.5"/>
<rect x="538.57" y="500.30" width="85.2" height="1" fill="#f0f6ff" opacity="0.5"/>
<rect x="538.57" y="498.50" width="85.2" height="1" fill="#f0f6ff" opacity="0.5"/>
<rect x="538.57" y="496.50" width="85.2" height="1" fill="#f0f6ff" opacity="0.5"/>
<rect x="538.57" y="490.80" width="85.2" height="1" fill="#f0f6ff" opacity="0.5"/>
<rect x="538.57" y="484.60" width="85.2" height="1" fill="#f0f6ff" opacity="0.5"/>
<rect x="538.57" y="478.90" width="85.2" height="1" fill="#f0f6ff" opacity="0.5"/>
<rect x="538.57" y="473.70" width="85.2" height="1" fill="#f0f6ff" opacity="0.5"/>
<rect x="538.57" y="472.30" width="85.2" height="1" fill="#f0f6ff" opacity="0.5"/>
<rect x="538.57" y="467.50" width="85.2" height="1" fill="#f0f6ff" opacity="0.5"/>
<rect x="538.57" y="464.50" width="85.2" height="1" fill="#f0f6ff" opacity="0.5"/>
<rect x="538.57" y="461.40" width="85.2" height="1" fill="#f0f6ff" opacity="0.5"/>
<rect x="538.57" y="460.00" width="85.2" height="1" fill="#f0f6ff" opacity="0.5"/>
<rect x="538.57" y="459.00" width="85.2" height="1" fill="#f0f6ff" opacity="0.5"/>
<rect x="538.57" y="457.80" width="85.2" height="1" fill="#f0f6ff" opacity="0.5"/>
<rect x="538.57" y="457.20" width="85.2" height="1" fill="#f0f6ff" opacity="0.5"/>
<rect x="538.57" y="456.60" width="85.2" height="1" fill="#f0f6ff" opacity="0.5"/>
<rect x="538.07" y="457.10" width="1" height="49.40" fill="#ffffff" opacity="0.35"/>
<rect x="623.27" y="457.10" width="1" height="49.40" fill="#ffffff" opacity="0.35"/>
<rect x="644.46" y="463.00" width="85.2" height="43.50" fill="#d6e4f5"/>
<rect x="644.46" y="463.30" width="85.2" height="43.20" fill="#cad9eb"/>
<rect x="644.46" y="463.60" width="85.2" height="42.90" fill="#becee2"/>
<rect x="644.46" y="464.20" width="85.2" height="42.30" fill="#b2c3d8"/>
<rect x="644.46" y="465.00" width="85.2" height="41.50" fill="#a6b8cf"/>
<rect x="644.46" y="466.10" width="85.2" height="40.40" fill="#9aadc5"/>
<rect x="644.46" y="468.90" width="85.2" height="37.60" fill="#8ea2bc"/>
<rect x="644.46" y="472.00" width="85.2" height="34.50" fill="#8297b2"/>
<rect x="644.46" y="474.60" width="85.2" height="31.90" fill="#768ca8"/>
<rect x="644.46" y="477.60" width="85.2" height="28.90" fill="#6b819f"/>
<rect x="644.46" y="482.70" width="85.2" height="23.80" fill="#5f7695"/>
<rect x="644.46" y="487.60" width="85.2" height="18.90" fill="#536b8c"/>
<rect x="644.46" y="492.60" width="85.2" height="13.90" fill="#476082"/>
<rect x="644.46" y="497.50" width="85.2" height="9.00" fill="#3b5579"/>
<rect x="644.46" y="500.30" width="85.2" height="6.20" fill="#2f4a6f"/>
<rect x="644.46" y="502.00" width="85.2" height="4.50" fill="#233f66"/>
<rect x="644.46" y="505.00" width="85.2" height="1.50" fill="#17345c"/>
<rect x="644.46" y="504.50" width="85.2" height="1" fill="#f0f6ff" opacity="0.5"/>
<rect x="644.46" y="501.50" width="85.2" height="1" fill="#f0f6ff" opacity="0.5"/>
<rect x="644.46" y="499.80" width="85.2" height="1" fill="#f0f6ff" opacity="0.5"/>
<rect x="644.46" y="497.00" width="85.2" height="1" fill="#f0f6ff" opacity="0.5"/>
<rect x="644.46" y="492.10" width="85.2" height="1" fill="#f0f6ff" opacity="0.5"/>
<rect x="644.46" y="487.10" width="85.2" height="1" fill="#f0f6ff" opacity="0.5"/>
<rect x="644.46" y="482.20" width="85.2" height="1" fill="#f0f6ff" opacity="0.5"/>
<rect x="644.46" y="477.10" width="85.2" height="1" fill="#f0f6ff" opacity="0.5"/>
<rect x="644.46" y="474.10" width="85.2" height="1" fill="#f0f6ff" opacity="0.5"/>
<rect x="644.46" y="471.50" width="85.2" height="1" fill="#f0f6ff" opacity="0.5"/>
<rect x="644.46" y="468.40" width="85.2" height="1" fill="#f0f6ff" opacity="0.5"/>
<rect x="644.46" y="465.60" width="85.2" height="1" fill="#f0f6ff" opacity="0.5"/>
<rect x="644.46" y="464.50" width="85.2" height="1" fill="#f0f6ff" opacity="0.5"/>
<rect x="644.46" y="463.70" width="85.2" height="1" fill="#f0f6ff" opacity="0.5"/>
<rect x="644.46" y="463.10" width="85.2" height="1" fill="#f0f6ff" opacity="0.5"/>
<rect x="644.46" y="462.80" width="85.2" height="1" fill="#f0f6ff" opacity="0.5"/>
<rect x="644.46" y="462.50" width="85.2" height="1" fill="#f0f6ff" opacity="0.5"/>
<rect x="643.96" y="463.00" width="1" height="43.50" fill="#ffffff" opacity="0.35"/>
<rect x="729.16" y="463.00" width="1" height="43.50" fill="#ffffff" opacity="0.35"/>
<rect x="750.35" y="472.70" width="85.2" height="33.80" fill="#d6e4f5"/>
<rect x="750.35" y="473.40" width="85.2" height="33.10" fill="#cad9eb"/>
<rect x="750.35" y="474.20" width="85.2" height="32.30" fill="#becee2"/>
<rect x="750.35" y="475.00" width="85.2" height="31.50" fill="#b2c3d8"/>
<rect x="750.35" y="475.80" width="85.2" height="30.70" fill="#a6b8cf"/>
<rect x="750.35" y="476.50" width="85.2" height="30.00" fill="#9aadc5"/>
<rect x="750.35" y="477.90" width="85.2" height="28.60" fill="#8ea2bc"/>
<rect x="750.35" y="482.90" width="85.2" height="23.60" fill="#8297b2"/>
<rect x="750.35" y="484.60" width="85.2" height="21.90" fill="#768ca8"/>
<rect x="750.35" y="486.30" width="85.2" height="20.20" fill="#6b819f"/>
<rect x="750.35" y="489.20" width="85.2" height="17.30" fill="#5f7695"/>
<rect x="750.35" y="492.50" width="85.2" height="14.00" fill="#536b8c"/>
<rect x="750.35" y="497.10" width="85.2" height="9.40" fill="#476082"/>
<rect x="750.35" y="500.40" width="85.2" height="6.10" fill="#3b5579"/>
<rect x="750.35" y="502.10" width="85.2" height="4.40" fill="#2f4a6f"/>
<rect x="750.35" y="503.30" width="85.2" height="3.20" fill="#233f66"/>
<rect x="750.35" y="505.50" width="85.2" height="1.00" fill="#17345c"/>
<rect x="750.35" y="505.00" width="85.2" height="1" fill="#f0f6ff" opacity="0.5"/>
<rect x="750.35" y="502.80" width="85.2" height="1" fill="#f0f6ff" opacity="0.5"/>
<rect x="750.35" y="501.60" width="85.2" height="1" fill="#f0f6ff" opacity="0.5"/>
<rect x="750.35" y="499.90" width="85.2" height="1" fill="#f0f6ff" opacity="0.5"/>
<rect x="750.35" y="496.60" width="85.2" height="1" fill="#f0f6ff" opacity="0.5"/>
<rect x="750.35" y="492.00" width="85.2" height="1" fill="#f0f6ff" opacity="0.5"/>
<rect x="750.35" y="488.70" width="85.2" height="1" fill="#f0f6ff" opacity="0.5"/>
<rect x="750.35" y="485.80" width="85.2" height="1" fill="#f0f6ff" opacity="0.5"/>
<rect x="750.35" y="484.10" width="85.2" height="1" fill="#f0f6ff" opacity="0.5"/>
<rect x="750.35" y="482.40" width="85.2" height="1" fill="#f0f6ff" opacity="0.5"/>
<rect x="750.35" y="477.40" width="85.2" height="1" fill="#f0f6ff" opacity="0.5"/>
<rect x="750.35" y="476.00" width="85.2" height="1" fill="#f0f6ff" opacity="0.5"/>
<rect x="750.35" y="475.30" width="85.2" height="1" fill="#f0f6ff" opacity="0.5"/>
<rect x="750.35" y="474.50" width="85.2" height="1" fill="#f0f6ff" opacity="0.5"/>
<rect x="750.35" y="473.70" width="85.2" height="1" fill="#f0f6ff" opacity="0.5"/>
<rect x="750.35" y="472.90" width="85.2" height="1" fill="#f0f6ff" opacity="0.5"/>
<rect x="750.35" y="472.20" width="85.2" height="1" fill="#f0f6ff" opacity="0.5"/>
<rect x="749.85" y="472.70" width="1" height="33.80" fill="#ffffff" opacity="0.35"/>
<rect x="835.05" y="472.70" width="1" height="33.80" fill="#ffffff" opacity="0.35"/>
<rect x="856.24" y="476.00" width="85.2" height="30.50" fill="#d6e4f5"/>
<rect x="856.24" y="476.60" width="85.2" height="29.90" fill="#cad9eb"/>
<rect x="856.24" y="477.20" width="85.2" height="29.30" fill="#becee2"/>
<rect x="856.24" y="477.90" width="85.2" height="28.60" fill="#b2c3d8"/>
<rect x="856.24" y="478.60" width="85.2" height="27.90" fill="#a6b8cf"/>
<rect x="856.24" y="479.50" width="85.2" height="27.00" fill="#9aadc5"/>
<rect x="856.24" y="482.10" width="85.2" height="24.40" fill="#8ea2bc"/>
<rect x="856.24" y="483.80" width="85.2" height="22.70" fill="#8297b2"/>
<rect x="856.24" y="487.10" width="85.2" height="19.40" fill="#768ca8"/>
<rect x="856.24" y="488.80" width="85.2" height="17.70" fill="#6b819f"/>
<rect x="856.24" y="492.10" width="85.2" height="14.40" fill="#5f7695"/>
<rect x="856.24" y="494.20" width="85.2" height="12.30" fill="#536b8c"/>
<rect x="856.24" y="495.80" width="85.2" height="10.70" fill="#476082"/>
<rect x="856.24" y="498.80" width="85.2" height="7.70" fill="#3b5579"/>
<rect x="856.24" y="501.30" width="85.2" height="5.20" fill="#2f4a6f"/>
<rect x="856.24" y="502.00" width="85.2" height="4.50" fill="#233f66"/>
<rect x="856.24" y="505.60" width="85.2" height="0.90" fill="#17345c"/>
<rect x="856.24" y="505.10" width="85.2" height="1" fill="#f0f6ff" opacity="0.5"/>
<rect x="856.24" y="501.50" width="85.2" height="1" fill="#f0f6ff" opacity="0.5"/>
<rect x="856.24" y="500.80" width="85.2" height="1" fill="#f0f6ff" opacity="0.5"/>
<rect x="856.24" y="498.30" width="85.2" height="1" fill="#f0f6ff" opacity="0.5"/>
<rect x="856.24" y="495.30" width="85.2" height="1" fill="#f0f6ff" opacity="0.5"/>
<rect x="856.24" y="493.70" width="85.2" height="1" fill="#f0f6ff" opacity="0.5"/>
<rect x="856.24" y="491.60" width="85.2" height="1" fill="#f0f6ff" opacity="0.5"/>
<rect x="856.24" y="488.30" width="85.2" height="1" fill="#f0f6ff" opacity="0.5"/>
<rect x="856.24" y="486.60" width="85.2" height="1" fill="#f0f6ff" opacity="0.5"/>
<rect x="856.24" y="483.30" width="85.2" height="1" fill="#f0f6ff" opacity="0.5"/>
<rect x="856.24" y="481.60" width="85.2" height="1" fill="#f0f6ff" opacity="0.5"/>
<rect x="856.24" y="479.00" width="85.2" height="1" fill="#f0f6ff" opacity="0.5"/>
<rect x="856.24" y="478.10" width="85.2" height="1" fill="#f0f6ff" opacity="0.5"/>
<rect x="856.24" y="477.40" width="85.2" height="1" fill="#f0f6ff" opacity="0.5"/>
<rect x="856.24" y="476.70" width="85.2" height="1" fill="#f0f6ff" opacity="0.5"/>
<rect x="856.24" y="476.10" width="85.2" height="1" fill="#f0f6ff" opacity="0.5"/>
<rect x="856.24" y="475.50" width="85.2" height="1" fill="#f0f6ff" opacity="0.5"/>
<rect x="855.74" y="476.00" width="1" height="30.50" fill="#ffffff" opacity="0.35"/>
<rect x="940.94" y="476.00" width="1" height="30.50" fill="#ffffff" opacity="0.35"/>
<rect x="962.12" y="481.70" width="85.2" height="24.80" fill="#d6e4f5"/>
<rect x="962.12" y="482.80" width="85.2" height="23.70" fill="#cad9eb"/>
<rect x="962.12" y="483.80" width="85.2" height="22.70" fill="#becee2"/>
<rect x="962.12" y="484.40" width="85.2" height="22.10" fill="#b2c3d8"/>
<rect x="962.12" y="485.00" width="85.2" height="21.50" fill="#a6b8cf"/>
<rect x="962.12" y="486.00" width="85.2" height="20.50" fill="#9aadc5"/>
<rect x="962.12" y="487.50" width="85.2" height="19.00" fill="#8ea2bc"/>
<rect x="962.12" y="490.00" width="85.2" height="16.50" fill="#8297b2"/>
<rect x="962.12" y="492.00" width="85.2" height="14.50" fill="#768ca8"/>
<rect x="962.12" y="494.20" width="85.2" height="12.30" fill="#6b819f"/>
<rect x="962.12" y="496.30" width="85.2" height="10.20" fill="#5f7695"/>
<rect x="962.12" y="498.00" width="85.2" height="8.50" fill="#536b8c"/>
<rect x="962.12" y="500.00" width="85.2" height="6.50" fill="#476082"/>
<rect x="962.12" y="502.10" width="85.2" height="4.40" fill="#3b5579"/>
<rect x="962.12" y="502.60" width="85.2" height="3.90" fill="#2f4a6f"/>
<rect x="962.12" y="503.80" width="85.2" height="2.70" fill="#233f66"/>
<rect x="962.12" y="505.60" width="85.2" height="0.90" fill="#17345c"/>
<rect x="962.12" y="505.10" width="85.2" height="1" fill="#f0f6ff" opacity="0.5"/>
<rect x="962.12" y="503.30" width="85.2" height="1" fill="#f0f6ff" opacity="0.5"/>
<rect x="962.12" y="502.10" width="85.2" height="1" fill="#f0f6ff" opacity="0.5"/>
<rect x="962.12" y="501.60" width="85.2" height="1" fill="#f0f6ff" opacity="0.5"/>
<rect x="962.12" y="499.50" width="85.2" height="1" fill="#f0f6ff" opacity="0.5"/>
<rect x="962.12" y="497.50" width="85.2" height="1" fill="#f0f6ff" opacity="0.5"/>
<rect x="962.12" y="495.80" width="85.2" height="1" fill="#f0f6ff" opacity="0.5"/>
<rect x="962.12" y="493.70" width="85.2" height="1" fill="#f0f6ff" opacity="0.5"/>
<rect x="962.12" y="491.50" width="85.2" height="1" fill="#f0f6ff" opacity="0.5"/>
<rect x="962.12" y="489.50" width="85.2" height="1" fill="#f0f6ff" opacity="0.5"/>
<rect x="962.12" y="487.00" width="85.2" height="1" fill="#f0f6ff" opacity="0.5"/>
<rect x="962.12" y="485.50" width="85.2" height="1" fill="#f0f6ff" opacity="0.5"/>
<rect x="962.12" y="484.50" width="85.2" height="1" fill="#f0f6ff" opacity="0.5"/>
<rect x="962.12" y="483.90" width="85.2" height="1" fill="#f0f6ff" opacity="0.5"/>
<rect x="962.12" y="483.30" width="85.2" height="1" fill="#f0f6ff" opacity="0.5"/>
<rect x="962.12" y="482.30" width="85.2" height="1" fill="#f0f6ff" opacity="0.5"/>
<rect x="962.12" y="481.20" width="85.2" height="1" fill="#f0f6ff" opacity="0.5"/>
<rect x="961.62" y="481.70" width="1" height="24.80" fill="#ffffff" opacity="0.35"/>
<rect x="1046.83" y="481.70" width="1" height="24.80" fill="#ffffff" opacity="0.35"/>
<rect x="104.8" y="505.9" width="952.6" height="1.3" fill="#ffffff"/>
<polyline points="157.60,280.00 263.50,374.00 369.38,412.49 475.27,433.58 581.16,446.92 687.05,456.13 792.94,462.87 898.83,468.01 1004.73,472.07" fill="none" stroke="#008000" stroke-width="1.5"/>
<circle cx="157.60" cy="280.00" r="2.1" fill="#008000"/>
<circle cx="263.50" cy="374.00" r="2.1" fill="#008000"/>
<circle cx="369.38" cy="412.49" r="2.1" fill="#008000"/>
<circle cx="475.27" cy="433.58" r="2.1" fill="#008000"/>
<circle cx="581.16" cy="446.92" r="2.1" fill="#008000"/>
<circle cx="687.05" cy="456.13" r="2.1" fill="#008000"/>
<circle cx="792.94" cy="462.87" r="2.1" fill="#008000"/>
<circle cx="898.83" cy="468.01" r="2.1" fill="#008000"/>
<circle cx="1004.73" cy="472.07" r="2.1" fill="#008000"/>
<rect x="1076.7" y="230.8" width="103" height="221.4" fill="none" stroke="#444" stroke-width="1"/>
<rect x="1085.5" y="236.10" width="7.8" height="7.8" fill="#17345c" stroke="#ffffff" stroke-opacity="0.35" stroke-width="1"/>
<rect x="1085.5" y="248.05" width="7.8" height="7.8" fill="#233f66" stroke="#ffffff" stroke-opacity="0.35" stroke-width="1"/>
<rect x="1085.5" y="260.00" width="7.8" height="7.8" fill="#2f4a6f" stroke="#ffffff" stroke-opacity="0.35" stroke-width="1"/>
<rect x="1085.5" y="271.95" width="7.8" height="7.8" fill="#3b5579" stroke="#ffffff" stroke-opacity="0.35" stroke-width="1"/>
<rect x="1085.5" y="283.90" width="7.8" height="7.8" fill="#476082" stroke="#ffffff" stroke-opacity="0.35" stroke-width="1"/>
<rect x="1085.5" y="295.85" width="7.8" height="7.8" fill="#536b8c" stroke="#ffffff" stroke-opacity="0.35" stroke-width="1"/>
<rect x="1085.5" y="307.80" width="7.8" height="7.8" fill="#5f7695" stroke="#ffffff" stroke-opacity="0.35" stroke-width="1"/>
<rect x="1085.5" y="319.75" width="7.8" height="7.8" fill="#6b819f" stroke="#ffffff" stroke-opacity="0.35" stroke-width="1"/>
<rect x="1085.5" y="331.70" width="7.8" height="7.8" fill="#768ca8" stroke="#ffffff" stroke-opacity="0.35" stroke-width="1"/>
<rect x="1085.5" y="343.65" width="7.8" height="7.8" fill="#8297b2" stroke="#ffffff" stroke-opacity="0.35" stroke-width="1"/>
<rect x="1085.5" y="355.60" width="7.8" height="7.8" fill="#8ea2bc" stroke="#ffffff" stroke-opacity="0.35" stroke-width="1"/>
<rect x="1085.5" y="367.55" width="7.8" height="7.8" fill="#9aadc5" stroke="#ffffff" stroke-opacity="0.35" stroke-width="1"/>
<rect x="1085.5" y="379.50" width="7.8" height="7.8" fill="#a6b8cf" stroke="#ffffff" stroke-opacity="0.35" stroke-width="1"/>
<rect x="1085.5" y="391.45" width="7.8" height="7.8" fill="#b2c3d8" stroke="#ffffff" stroke-opacity="0.35" stroke-width="1"/>
<rect x="1085.5" y="403.40" width="7.8" height="7.8" fill="#becee2" stroke="#ffffff" stroke-opacity="0.35" stroke-width="1"/>
<rect x="1085.5" y="415.35" width="7.8" height="7.8" fill="#cad9eb" stroke="#ffffff" stroke-opacity="0.35" stroke-width="1"/>
<rect x="1085.5" y="427.30" width="7.8" height="7.8" fill="#d6e4f5" stroke="#ffffff" stroke-opacity="0.35" stroke-width="1"/>
<line x1="1080" y1="443.15" x2="1098.7" y2="443.15" stroke="#008000" stroke-width="1.5"/>
<circle cx="1089.3" cy="443.15" r="2.1" fill="#008000"/>
</svg>
<svg style="left:0;top:0" width="1200" height="632"><text x="0" y="0" transform="translate(76.4,368.6) rotate(-90)" text-anchor="middle" font-family="Liberation Sans" font-size="9.2" fill="#e8e8e8" textLength="45.6" lengthAdjust="spacingAndGlyphs">Frequency</text></svg>

<svg style="left:0;top:0" width="1200" height="632" viewBox="0 0 1200 632"><text x="26.00" y="16.00" font-size="8.6" fill="#ababab" textLength="17" lengthAdjust="spacingAndGlyphs">Datei</text><text x="81.00" y="16.00" font-size="8.6" fill="#ababab" textLength="15.2" lengthAdjust="spacingAndGlyphs">Start</text><text x="132.90" y="16.00" font-size="8.6" fill="#474747" textLength="19.3" lengthAdjust="spacingAndGlyphs">Daten</text><text x="181.00" y="16.00" font-size="8.6" fill="#474747" textLength="50" lengthAdjust="spacingAndGlyphs">Transformieren</text><text x="254.00" y="16.00" font-size="8.6" fill="#ffffff" font-weight="700" textLength="40.4" lengthAdjust="spacingAndGlyphs">Analysieren</text><text x="323.00" y="16.00" font-size="8.6" fill="#474747" textLength="18" lengthAdjust="spacingAndGlyphs">Audit</text><text x="378.40" y="16.00" font-size="8.6" fill="#ababab" textLength="15.6" lengthAdjust="spacingAndGlyphs">Hilfe</text><text x="581.70" y="15.40" font-size="8.6" fill="#ababab" textLength="33.5" lengthAdjust="spacingAndGlyphs">Musterfall</text><text x="31.80" y="68.40" font-size="7.3" fill="#ececec" textLength="36.3" lengthAdjust="spacingAndGlyphs">Datenqualität</text><text x="84.70" y="68.40" font-size="7.3" fill="#ececec" textLength="37" lengthAdjust="spacingAndGlyphs">Visualisierung</text><text x="144.00" y="68.40" font-size="7.3" fill="#ececec" textLength="21" lengthAdjust="spacingAndGlyphs">Analyse</text><text x="186.70" y="68.40" font-size="7.3" fill="#ececec" textLength="32" lengthAdjust="spacingAndGlyphs">Vergleichen</text><text x="259.70" y="68.40" font-size="7.3" fill="#ececec" textLength="13.5" lengthAdjust="spacingAndGlyphs">MUS</text><text x="302.30" y="68.40" font-size="7.3" fill="#ececec" textLength="23.7" lengthAdjust="spacingAndGlyphs">Klassisch</text><text x="362.20" y="45.00" font-size="7.3" fill="#ececec" textLength="20.4" lengthAdjust="spacingAndGlyphs">Zufällig</text><text x="362.20" y="67.40" font-size="7.3" fill="#ececec" textLength="32.7" lengthAdjust="spacingAndGlyphs">Geschichtet</text><text x="111.10" y="88.00" font-size="7.3" fill="#808080" textLength="28.6" lengthAdjust="spacingAndGlyphs">Auswerten</text><text x="309.80" y="88.00" font-size="7.3" fill="#808080" textLength="29" lengthAdjust="spacingAndGlyphs">Stichprobe</text><text x="77.60" y="133.20" font-size="8.6" fill="#ececec" textLength="37.5" lengthAdjust="spacingAndGlyphs">Kategorie:</text><text x="351.20" y="133.20" font-size="8.6" fill="#ececec" textLength="19" lengthAdjust="spacingAndGlyphs">Wert:</text><text x="626.00" y="133.20" font-size="8.6" fill="#ececec" textLength="40.7" lengthAdjust="spacingAndGlyphs">Analysetyp:</text><text x="86.10" y="160.20" font-size="8.6" fill="#e8e8e8" textLength="53.2" lengthAdjust="spacingAndGlyphs">SUB-CATEGORY</text><text x="359.80" y="160.20" font-size="8.6" fill="#e8e8e8" textLength="20.4" lengthAdjust="spacingAndGlyphs">SALES</text><text x="634.30" y="160.20" font-size="8.6" fill="#e8e8e8" textLength="35.7" lengthAdjust="spacingAndGlyphs">Erste Ziffer</text><text x="1017.10" y="160.20" font-size="8.6" fill="#f4f4f4" textLength="34.8" lengthAdjust="spacingAndGlyphs" style="stroke:#f4f4f4;stroke-width:0.2px;">Ausführen</text><text x="105.80" y="213.20" font-size="15.7" fill="#e6e6e6" textLength="108.5" lengthAdjust="spacingAndGlyphs">Alles zusammen</text><text x="101.60" y="509.10" font-size="8.6" fill="#ececec" text-anchor="end">0</text><text x="101.60" y="465.52" font-size="8.6" fill="#ececec" text-anchor="end">500</text><text x="101.60" y="421.93" font-size="8.6" fill="#ececec" text-anchor="end">1000</text><text x="101.60" y="378.35" font-size="8.6" fill="#ececec" text-anchor="end">1500</text><text x="101.60" y="334.77" font-size="8.6" fill="#ececec" text-anchor="end">2000</text><text x="101.60" y="291.18" font-size="8.6" fill="#ececec" text-anchor="end">2500</text><text x="101.60" y="247.60" font-size="8.6" fill="#ececec" text-anchor="end">3000</text><text x="157.60" y="517.40" font-size="8.6" fill="#ececec" text-anchor="middle">1</text><text x="263.50" y="517.40" font-size="8.6" fill="#ececec" text-anchor="middle">2</text><text x="369.38" y="517.40" font-size="8.6" fill="#ececec" text-anchor="middle">3</text><text x="475.27" y="517.40" font-size="8.6" fill="#ececec" text-anchor="middle">4</text><text x="581.16" y="517.40" font-size="8.6" fill="#ececec" text-anchor="middle">5</text><text x="687.05" y="517.40" font-size="8.6" fill="#ececec" text-anchor="middle">6</text><text x="792.94" y="517.40" font-size="8.6" fill="#ececec" text-anchor="middle">7</text><text x="898.83" y="517.40" font-size="8.6" fill="#ececec" text-anchor="middle">8</text><text x="1004.73" y="517.40" font-size="8.6" fill="#ececec" text-anchor="middle">9</text><text x="581.50" y="532.20" font-size="9.8" fill="#ececec" text-anchor="middle" textLength="47" lengthAdjust="spacingAndGlyphs">First Digits</text><text x="1102.00" y="243.10" font-size="8.2" fill="#f0f0f0" style="letter-spacing:0.1px;stroke:#f0f0f0;stroke-width:0.25px;">Bookcases</text><text x="1102.00" y="255.05" font-size="8.2" fill="#f0f0f0" style="letter-spacing:0.1px;stroke:#f0f0f0;stroke-width:0.25px;">Chairs</text><text x="1102.00" y="267.00" font-size="8.2" fill="#f0f0f0" style="letter-spacing:0.1px;stroke:#f0f0f0;stroke-width:0.25px;">Labels</text><text x="1102.00" y="278.95" font-size="8.2" fill="#f0f0f0" style="letter-spacing:0.1px;stroke:#f0f0f0;stroke-width:0.25px;">Tables</text><text x="1102.00" y="290.90" font-size="8.2" fill="#f0f0f0" style="letter-spacing:0.1px;stroke:#f0f0f0;stroke-width:0.25px;">Storage</text><text x="1102.00" y="302.85" font-size="8.2" fill="#f0f0f0" style="letter-spacing:0.1px;stroke:#f0f0f0;stroke-width:0.25px;">Furnishings</text><text x="1102.00" y="314.80" font-size="8.2" fill="#f0f0f0" style="letter-spacing:0.1px;stroke:#f0f0f0;stroke-width:0.25px;">Phones</text><text x="1102.00" y="326.75" font-size="8.2" fill="#f0f0f0" style="letter-spacing:0.1px;stroke:#f0f0f0;stroke-width:0.25px;">Binders</text><text x="1102.00" y="338.70" font-size="8.2" fill="#f0f0f0" style="letter-spacing:0.1px;stroke:#f0f0f0;stroke-width:0.25px;">Appliances</text><text x="1102.00" y="350.65" font-size="8.2" fill="#f0f0f0" style="letter-spacing:0.1px;stroke:#f0f0f0;stroke-width:0.25px;">Paper</text><text x="1102.00" y="362.60" font-size="8.2" fill="#f0f0f0" style="letter-spacing:0.1px;stroke:#f0f0f0;stroke-width:0.25px;">Art</text><text x="1102.00" y="374.55" font-size="8.2" fill="#f0f0f0" style="letter-spacing:0.1px;stroke:#f0f0f0;stroke-width:0.25px;">Accessories</text><text x="1102.00" y="386.50" font-size="8.2" fill="#f0f0f0" style="letter-spacing:0.1px;stroke:#f0f0f0;stroke-width:0.25px;">Envelopes</text><text x="1102.00" y="398.45" font-size="8.2" fill="#f0f0f0" style="letter-spacing:0.1px;stroke:#f0f0f0;stroke-width:0.25px;">Fasteners</text><text x="1102.00" y="410.40" font-size="8.2" fill="#f0f0f0" style="letter-spacing:0.1px;stroke:#f0f0f0;stroke-width:0.25px;">Supplies</text><text x="1102.00" y="422.35" font-size="8.2" fill="#f0f0f0" style="letter-spacing:0.1px;stroke:#f0f0f0;stroke-width:0.25px;">Machines</text><text x="1102.00" y="434.30" font-size="8.2" fill="#f0f0f0" style="letter-spacing:0.1px;stroke:#f0f0f0;stroke-width:0.25px;">Copiers</text><text x="1102.00" y="446.25" font-size="8.2" fill="#f0f0f0" style="letter-spacing:0.1px;stroke:#f0f0f0;stroke-width:0.25px;">Expected (Benford)</text><text x="979.60" y="559.40" font-size="8.2" fill="#e4e4e4" textLength="152.7" lengthAdjust="spacingAndGlyphs">Doppelklick auf die Legende wählt alles ab/an,</text><text x="979.60" y="569.00" font-size="8.2" fill="#e4e4e4" textLength="121.4" lengthAdjust="spacingAndGlyphs">Strg+Klick erlaubt Mehrfachauswahl.</text><text x="85.50" y="618.40" font-size="8.2" fill="#f2dcdc" textLength="31.5" lengthAdjust="spacingAndGlyphs">Schließen</text><text x="731.50" y="618.40" font-size="8.2" fill="#e4e4e4" textLength="70.2" lengthAdjust="spacingAndGlyphs">Screenshot speichern</text><text x="840.40" y="618.40" font-size="8.2" fill="#e4e4e4" textLength="65" lengthAdjust="spacingAndGlyphs">Interaktiv speichern</text><text x="1001.90" y="618.40" font-size="8.2" fill="#e4e4e4" textLength="31.6" lengthAdjust="spacingAndGlyphs">Übersicht</text><text x="1077.50" y="618.40" font-size="8.2" fill="#e4e4e4" textLength="46.5" lengthAdjust="spacingAndGlyphs">Ziffernanalyse</text></svg>
</body></html>
